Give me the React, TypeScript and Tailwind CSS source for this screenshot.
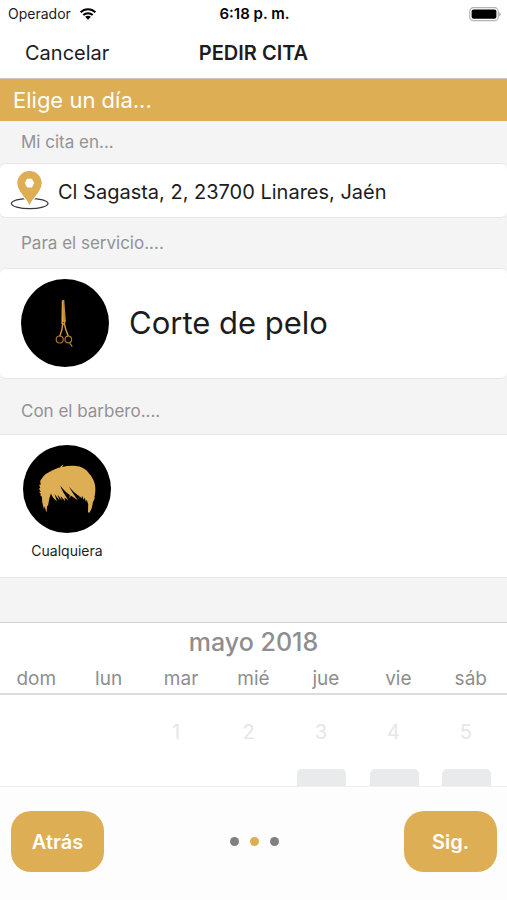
const weekdays = ['dom', 'lun', 'mar', 'mié', 'jue', 'vie', 'sáb'];
const firstWeek = ['', '', '1', '2', '3', '4', '5'];
const secondWeek = [false, false, false, false, true, true, true];

function WifiIcon() {
  return (
    <svg viewBox="0 0 18 13" className="h-3 w-[18px]" fill="none" stroke="#000" strokeWidth="2.2">
      <path d="M1 4.6C5.5.2 12.500.2 17 4.600" />
      <path d="M3.900 7.700c2.900-2.700 7.300-2.700 10.200 0" />
      <path d="M9 12.600 5.900 9.500c1.800-1.500 4.400-1.500 6.200 0z" fill="#000" stroke="none" />
    </svg>
  );
}

function BatteryIcon() {
  return (
    <svg viewBox="0 0 32 15" className="h-[15px] w-8">
      <rect x=".7" y=".7" width="28.600" height="13" rx="3.800" fill="#fff" stroke="#b4b4b4" strokeWidth="1.200" />
      <rect x="2.600" y="2.600" width="24.800" height="9.200" rx="2" fill="#000" />
      <path d="M30.300 5.200c1.700.6 1.700 3.400 0 4z" fill="#999" />
    </svg>
  );
}

function PinIcon() {
  return (
    <svg viewBox="0 0 40 40" className="h-10 w-10 shrink-0">
      <ellipse cx="19.700" cy="32.500" rx="18.300" ry="5.200" fill="none" stroke="#3a3a3c" strokeWidth="1.200" />
      <path
        d="M19.500 36C17 29 6.300 22.500 6.300 12.300a13.200 13.200 0 0 1 26.400 0C32.700 22.500 22 29 19.500 36z"
        fill="#fff"
      />
      <path
        fillRule="evenodd"
        d="M19.500 34.300C16.500 27 7.300 20.500 7.300 12.100a12.200 12.200 0 0 1 24.400 0c0 8.400-9.200 14.900-12.200 22.200zM17.200 7.700l-2.500 4.400 2.500 4.400h4.600l2.500-4.400-2.500-4.400z"
        fill="#deae55"
      />
    </svg>
  );
}

function ScissorsAvatar() {
  return (
    <svg viewBox="0 0 88 88" className="h-[88px] w-[88px] shrink-0">
      <circle cx="44" cy="44" r="44" fill="#000" />
      <path d="M40.800 21.500 43.200 20.800 44.800 42l-1.200 4-3.200-1z" fill="#d9a247" />
      <path d="M42.800 21.500l.4 20" stroke="#7a5318" strokeWidth=".5" />
      <path
        d="M41.800 44.500C41.500 49 40.500 53 38.800 57.200M43.300 44.500C44 49.500 45.500 53 47.200 57"
        stroke="#d09a43"
        strokeWidth="1.500"
        fill="none"
      />
      <circle cx="42.500" cy="43.500" r=".8" fill="#4a3210" />
      <g fill="none" stroke="#a87a33" strokeWidth="1.200">
        <circle cx="38.700" cy="60.500" r="3.500" />
        <circle cx="47.300" cy="60.500" r="3.300" />
        <path d="M49.500 63.200c-.8 1.200-.5 2.300.8 2.700l.8 2" />
      </g>
    </svg>
  );
}

function HairAvatar() {
  return (
    <svg viewBox="0 0 88 88" className="h-[88px] w-[88px]">
      <circle cx="44" cy="44" r="44" fill="#000" />
      <path
        d="M18.500 34C20.500 30 24 28 27.700 26.200C31 24.500 34 23.300 37 22.600C37.800 21.200 39 20.200 40.500 19.600C39.800 20.600 39.500 21.200 39.400 22C43 20.900 47 20.500 51 20.800C56 21 61 22.500 64.500 26.500C69 31.500 72.200 37 72.300 42.500C72.500 47 72 50.500 71.200 52.500L72 52.200C71.200 54.500 70.500 56 69.800 57.500C69.500 61 68.500 65 66.200 68L65 67L65.200 59L63.500 54.500L63 57L61.500 52.500L60.800 55L59 50.500L58.600 53.500L56.500 51L55.800 54L49 46.500L54.500 55L47.800 50.500L46.800 53.500L39.500 46L45.500 55.500L41.500 52.500L42 56L37.500 51L39 55.500L34.500 49.500L36.500 55.500L31.500 49L34 56.500C31 54 29 51.500 28 48.500C26.500 52 26 55 25.500 58L25 61L24.200 60.500L23.400 67.500L21.500 61L21 64.500L19.200 57L19 52L16.800 49.800L18.200 49.500L16 46.800L17.800 47L16 43.500L17.300 43L16.200 40L18 39.200C16.800 37.500 17 35.500 18.500 34Z"
        fill="#deae55"
      />
      <g fill="#000">
        <path d="M37.300 40.500C38.500 45 41.500 49.500 46.500 54.500L46.800 50C43 47.500 40 44.500 37.300 40.500Z" />
        <path d="M46 41.500C48 46 51.500 50.500 55.500 54L56.200 51C52 48.500 49 45.500 46 41.500Z" />
      </g>
    </svg>
  );
}

export default function App() {
  return (
    <div className="flex h-screen flex-col overflow-hidden bg-[#f4f4f4] font-['Inter','Liberation_Sans',sans-serif] text-[#1c1c1e]">
      <header className="border-b border-[#c9c3b8] bg-white">
        <div className="grid h-7 grid-cols-[1fr_auto_1fr] items-center pr-1.5 pl-2">
          <div className="flex items-center gap-2 text-sm">
            <span>Operador</span>
            <WifiIcon />
          </div>
          <span className="text-center text-[15px] font-semibold text-black">6:18 p. m.</span>
          <div className="flex justify-end">
            <BatteryIcon />
          </div>
        </div>
        <div className="grid h-[50px] grid-cols-[1fr_auto_1fr] items-center px-[25px]">
          <button type="button" className="justify-self-start text-xl">
            Cancelar
          </button>
          <h1 className="text-xl font-semibold">PEDIR CITA</h1>
          <span />
        </div>
      </header>

      <h2 className="flex h-[42px] shrink-0 items-center bg-[#deae55] px-[13px] text-[22px] text-white">Elige un día...</h2>

      <h3 className="flex h-[42px] shrink-0 items-center px-[21px] pt-0.5 text-[17px] text-[#929294]">Mi cita en...</h3>
      <div className="flex h-[55px] shrink-0 items-center gap-2 rounded-md border-y border-[#e6e6e6] bg-white px-2.5">
        <PinIcon />
        <span className="pt-0.5 text-xl">Cl Sagasta, 2, 23700 Linares, Jaén</span>
      </div>

      <h3 className="flex h-[50px] shrink-0 items-center px-[21px] pt-0.5 text-[17px] text-[#929294]">
        Para el servicio....
      </h3>
      <div className="flex h-[111px] shrink-0 items-center gap-5 rounded-md border-y border-[#e6e6e6] bg-white px-[21px] pb-0.5">
        <ScissorsAvatar />
        <span className="pt-0.5 text-[31px]">Corte de pelo</span>
      </div>

      <h3 className="flex h-[55px] shrink-0 items-center px-[21px] pt-2.5 text-[17px] text-[#929294]">
        Con el barbero....
      </h3>
      <div className="h-36 shrink-0 border-y border-[#e6e6e6] bg-white px-[23px] pt-2.5">
        <button type="button" className="flex flex-col items-center gap-2 text-sm">
          <HairAvatar />
          <span>Cualquiera</span>
        </button>
      </div>

      <section className="mt-11 flex min-h-0 flex-1 flex-col overflow-hidden border-t border-[#d3d3d3] bg-white text-[#8e8e90]">
        <div className="border-b-2 border-[#dcdcdc]">
          <h3 className="h-[38px] text-center text-[25px] leading-[38px] font-medium">mayo 2018</h3>
          <div className="grid h-8 grid-cols-7 items-center pt-1 text-center text-[19px]">
            {weekdays.map((day) => (
              <span key={day}>{day}</span>
            ))}
          </div>
        </div>
        <div className="grid h-[74px] shrink-0 grid-cols-7 items-center text-center text-xl text-[#e6e6e8]">
          {firstWeek.map((day, i) => (
            <span key={i} className="pr-2.5">
              {day}
            </span>
          ))}
        </div>
        <div className="grid shrink-0 grid-cols-7">
          {secondWeek.map((blocked, i) => (
            <div key={i} className="flex justify-center pr-2">
              {blocked && <div className="h-12 w-[49px] rounded-[5px] bg-[#e9eaeb]" />}
            </div>
          ))}
        </div>
      </section>

      <footer className="grid h-[114px] shrink-0 grid-cols-[1fr_auto_1fr] items-center border-t border-[#f0f0f0] bg-[#fdfdfd] pr-2.5 pb-1 pl-[11px]">
        <button
          type="button"
          className="h-[61px] w-[93px] rounded-[20px] bg-[#deae55] text-xl font-semibold text-white"
        >
          Atrás
        </button>
        <div className="flex gap-[11px]">
          <span className="h-[9px] w-[9px] rounded-full bg-[#808080]" />
          <span className="h-[9px] w-[9px] rounded-full bg-[#deae55]" />
          <span className="h-[9px] w-[9px] rounded-full bg-[#808080]" />
        </div>
        <button
          type="button"
          className="h-[61px] w-[93px] justify-self-end rounded-[20px] bg-[#deae55] text-xl font-semibold text-white"
        >
          Sig.
        </button>
      </footer>
    </div>
  );
}
